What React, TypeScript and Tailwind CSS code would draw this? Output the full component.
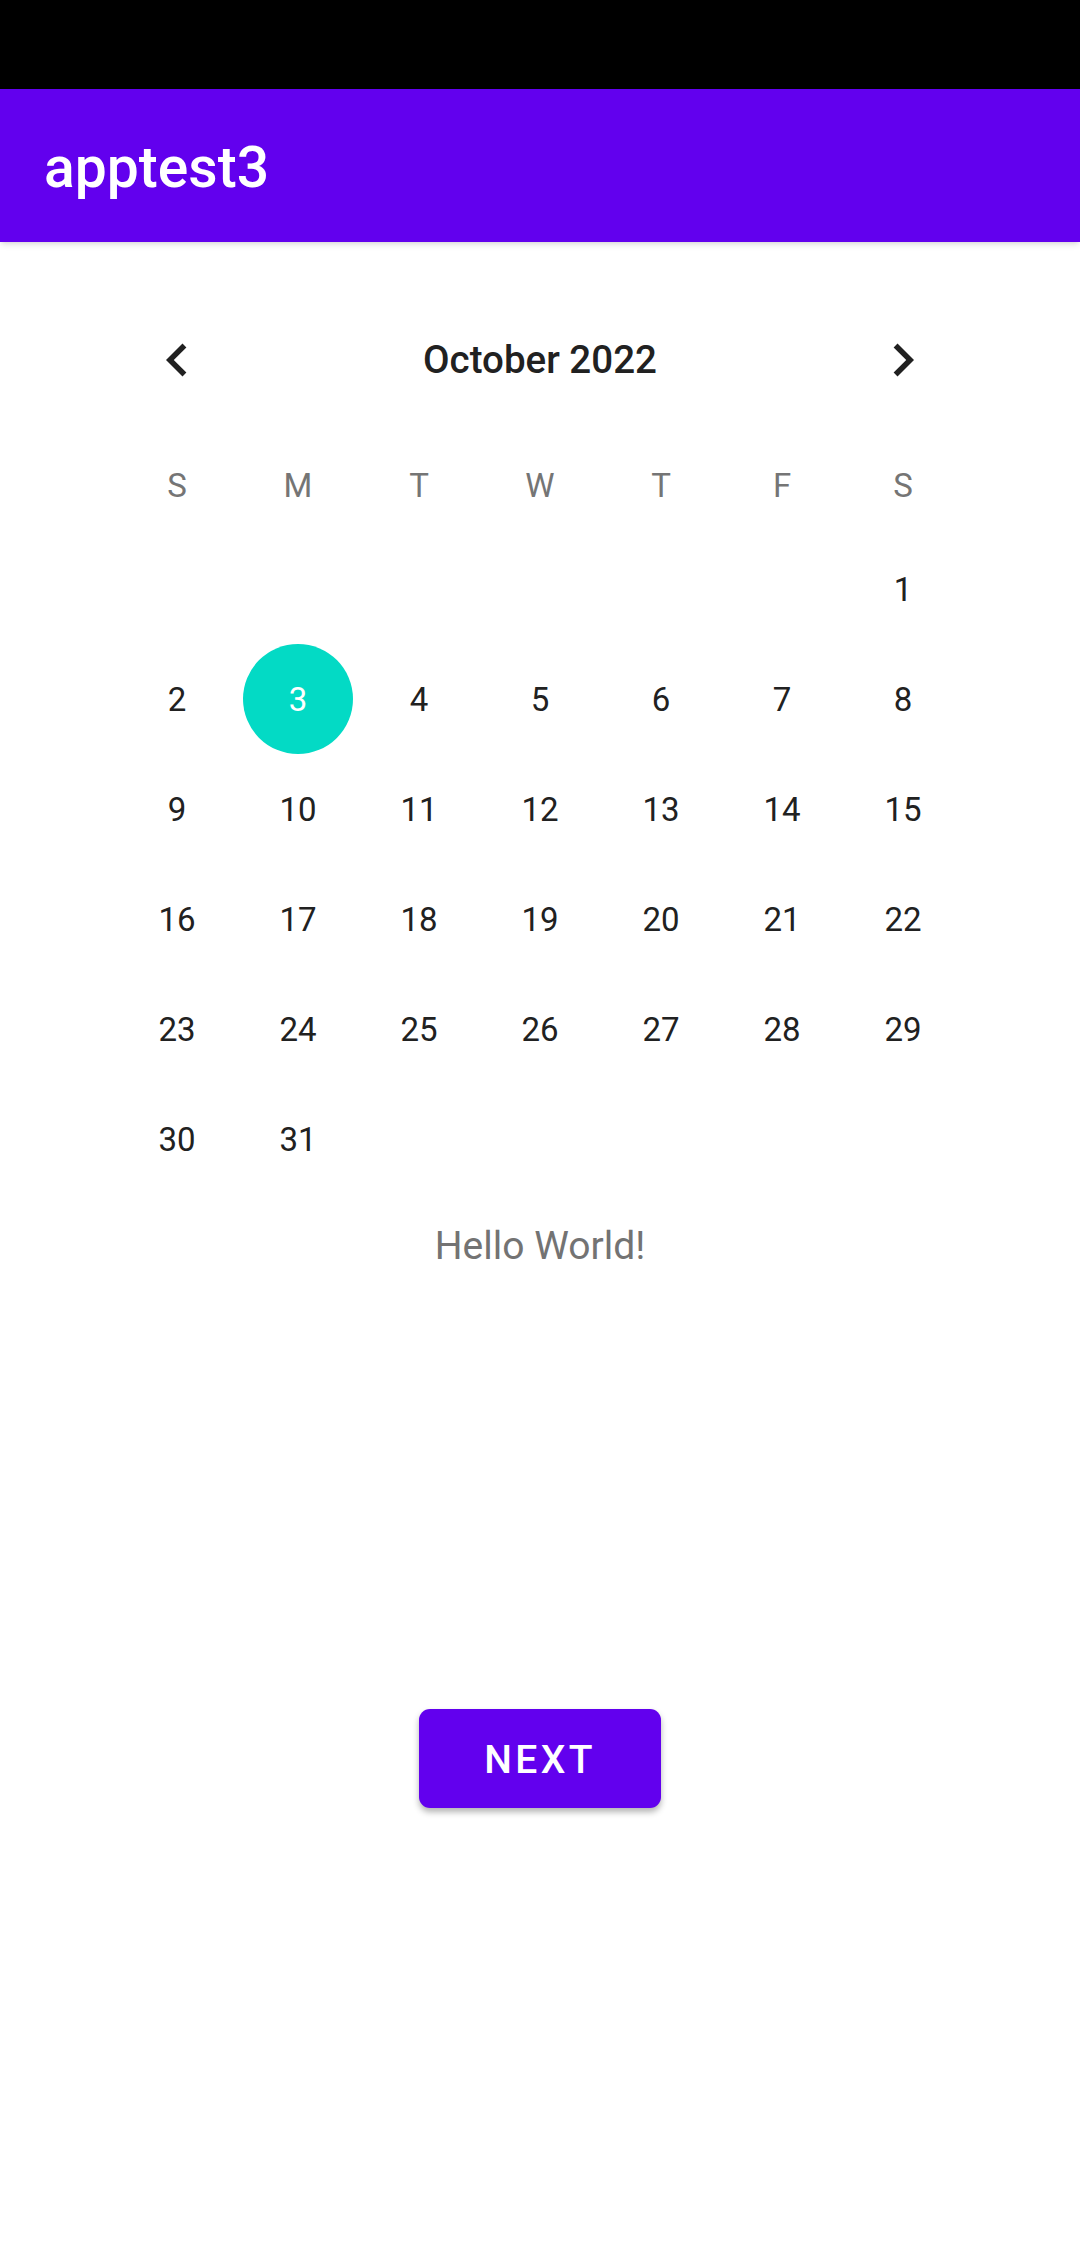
import React from "react";

const font = { fontFamily: "Roboto, 'Noto Sans', sans-serif" };

function Chevron({ dir }: { dir: "left" | "right" }) {
  return (
    <svg width="66" height="66" viewBox="0 0 24 24" className="fill-[#212121]">
      {dir === "left" ? (
        <path d="M15.41 7.41L14 6l-6 6 6 6 1.41-1.41L10.83 12z" />
      ) : (
        <path d="M10 6L8.59 7.41 13.17 12l-4.58 4.59L10 18l6-6z" />
      )}
    </svg>
  );
}

export default function App() {
  const labels = ["S", "M", "T", "W", "T", "F", "S"];
  const cells: (number | null)[] = [null, null, null, null, null, null];
  for (let d = 1; d <= 31; d++) cells.push(d);
  while (cells.length < 42) cells.push(null);
  const rows: (number | null)[][] = [];
  for (let i = 0; i < 6; i++) rows.push(cells.slice(i * 7, i * 7 + 7));

  return (
    <div className="w-[1080px] h-[2246px] bg-white flex flex-col" style={font}>
      <div className="h-[89px] bg-black shrink-0" />
      <div className="h-[153px] bg-[#6200EE] flex items-center pl-[44px] pt-[4px] shadow-md shrink-0 relative z-10">
        <span className="text-white text-[57px] font-medium leading-none">apptest3</span>
      </div>

      <div className="w-[847px] mx-auto mt-[63px] flex flex-col">
        <div className="h-[110px] grid grid-cols-7 items-center relative">
          <div className="flex justify-center">
            <Chevron dir="left" />
          </div>
          <div className="col-span-5 flex justify-center">
            <span className="text-[38.5px] font-medium text-[#212121] leading-none">October 2022</span>
          </div>
          <div className="flex justify-center">
            <Chevron dir="right" />
          </div>
        </div>

        <div className="h-[98px] mt-[21px] grid grid-cols-7 items-center">
          {labels.map((l, i) => (
            <div key={i} className="flex justify-center text-[33px] text-[#757575] leading-none">
              {l}
            </div>
          ))}
        </div>

        {rows.map((row, ri) => (
          <div key={ri} className="h-[110px] grid grid-cols-7 items-center">
            {row.map((d, ci) => (
              <div key={ci} className="flex justify-center items-center">
                {d === 3 ? (
                  <div className="w-[110px] h-[110px] rounded-full bg-[#03DAC5] flex items-center justify-center text-white text-[33px] leading-none">
                    3
                  </div>
                ) : d ? (
                  <span className="text-[33px] text-[#212121] leading-none">{d}</span>
                ) : null}
              </div>
            ))}
          </div>
        ))}
      </div>

      <div className="mt-[27px] h-[50px] flex items-center justify-center">
        <span className="text-[39px] text-[#737373] leading-none">Hello World!</span>
      </div>

      <div className="mt-[438px] flex justify-center">
        <button className="w-[242px] h-[99px] rounded-[11px] bg-[#6200EE] text-white text-[39px] font-medium tracking-[3.4px] pt-[3px] shadow-[0_4px_6px_rgba(0,0,0,0.3)] flex items-center justify-center">
          NEXT
        </button>
      </div>
    </div>
  );
}
